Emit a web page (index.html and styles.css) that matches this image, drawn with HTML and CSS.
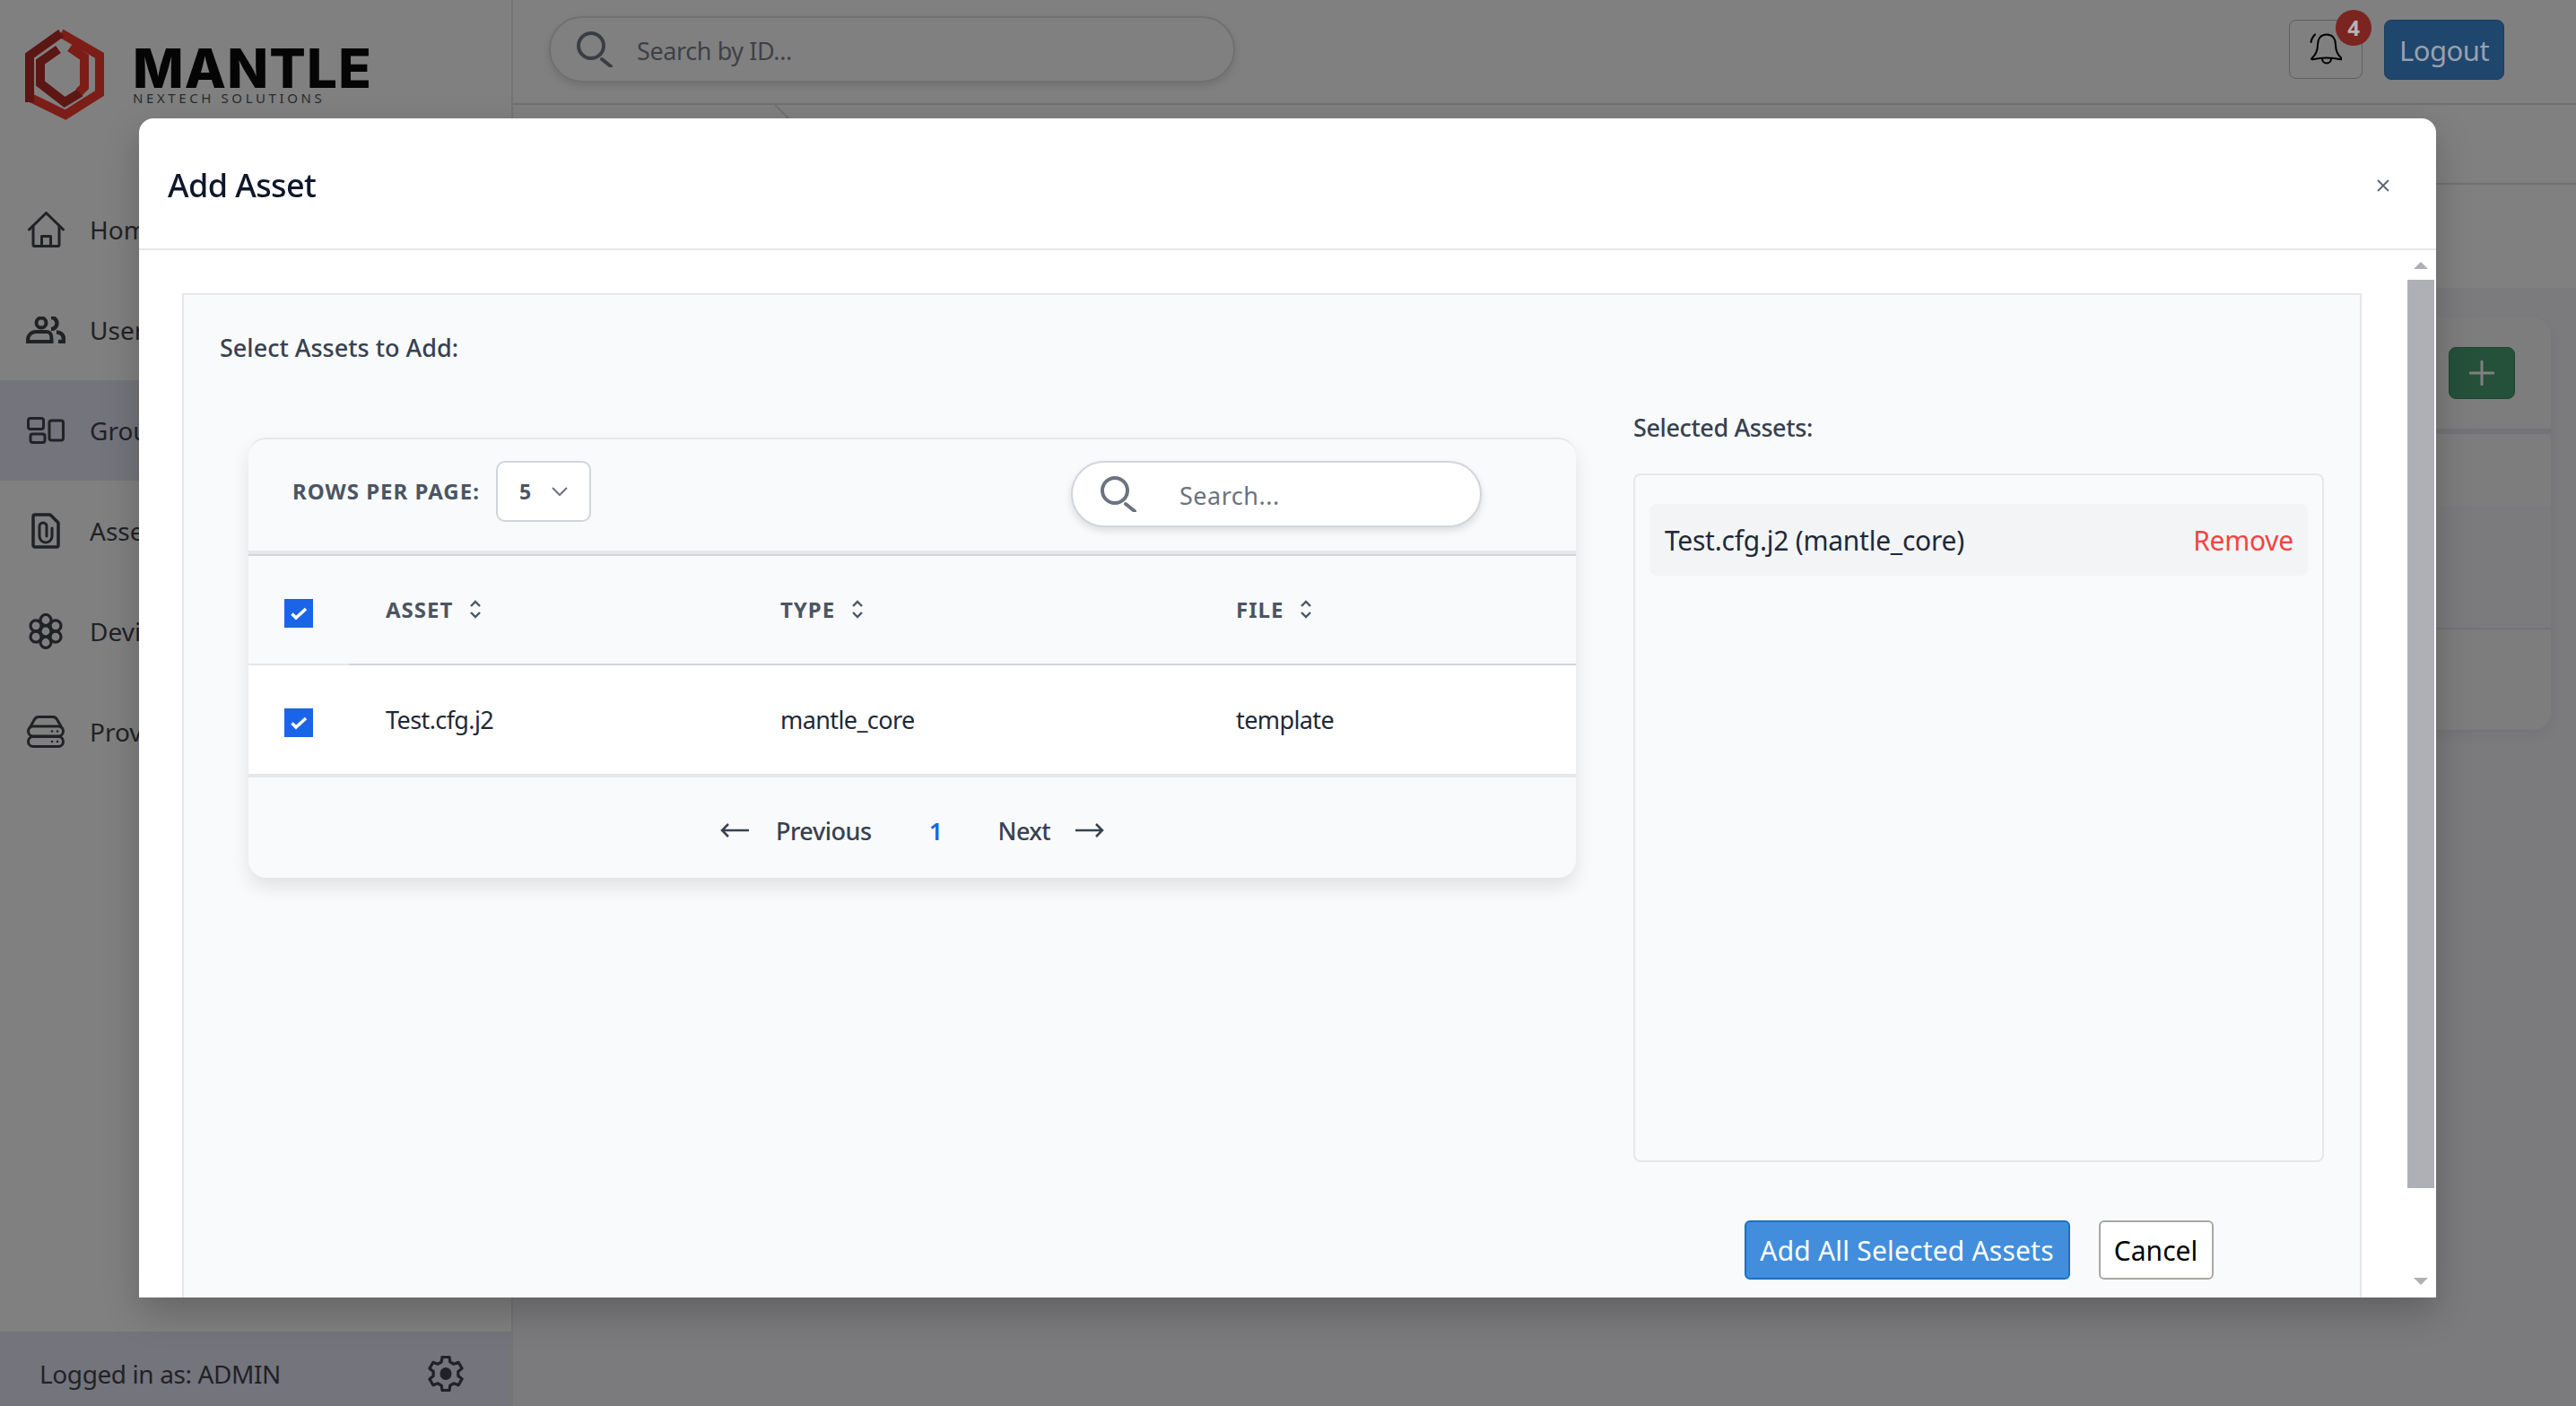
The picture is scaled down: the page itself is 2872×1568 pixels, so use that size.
FILE: index.html
```html
<!DOCTYPE html>
<html lang="en">
<head>
    <meta charset="UTF-8">
    <title>Mantle - Add Asset</title>
    <link rel="stylesheet" href="styles.css">
</head>
<body>
    <div class="app">
        <aside class="sidebar">
            <div class="logo">
                <svg class="logo-mark" width="92" height="104" viewBox="0 0 92 104" fill="none" stroke-width="10" stroke-linejoin="miter">
                    <polyline points="40,6 83,31 83,73 45,97 6,78" stroke="#7c1d17"/>
                    <polyline points="40,6 5,31 5,83" stroke="#5c1613"/>
                    <polyline points="37,24 17,38 17,62 44,83 62,72" stroke="#5c1613"/>
                    <polyline points="50,22 66,33 66,66 60,72" stroke="#7c1d17"/>
                </svg>
                <div class="logo-text">
                    <div class="logo-name">MANTLE</div>
                    <div class="logo-sub">NEXTECH SOLUTIONS</div>
                </div>
            </div>
            <nav class="nav">
                <a class="nav-item">
                    <span class="nav-icon">
                        <svg width="41" height="40" viewBox="0 0 41 40" fill="none" stroke="#212226" stroke-width="3" stroke-linecap="round" stroke-linejoin="round">
                            <path d="M1.5 20 20.5 1.5l19 18.500"/>
                            <path d="M6 16v21a1.500 1.500 0 0 0 1.500 1.500h26a1.500 1.500 0 0 0 1.500-1.500V16"/>
                            <path d="M15.500 38V27.500h10V38"/>
                        </svg>
                    </span>
                    Home
                </a>
                <a class="nav-item">
                    <span class="nav-icon">
                        <svg width="44" height="30" viewBox="0 0 44 30" fill="none" stroke="#212226" stroke-width="4">
                            <circle cx="17" cy="7" r="5.500"/>
                            <path d="M2 28V26c0-5 4-9 9-9h12c5 0 5.500 4 5.500 9v2z"/>
                            <path d="M28 1a6.500 6.500 0 0 1 0 13" stroke-width="4.500"/>
                            <path d="M34 17.500c5 0 8 3 8 8v2.500h-6" stroke-width="4.500"/>
                        </svg>
                    </span>
                    Users
                </a>
                <a class="nav-item active">
                    <span class="nav-icon">
                        <svg width="42" height="30" viewBox="0 0 42 30" fill="none" stroke="#212226" stroke-width="3">
                            <rect x="1.500" y="1.500" width="17" height="12" rx="2.500"/>
                            <rect x="4" y="19" width="16" height="9.500" rx="2.500"/>
                            <rect x="25" y="4" width="15.500" height="22" rx="2.500"/>
                        </svg>
                    </span>
                    Groups
                </a>
                <a class="nav-item">
                    <span class="nav-icon">
                        <svg width="32" height="40" viewBox="0 0 32 40" fill="none" stroke="#212226" stroke-width="3.500" stroke-linejoin="round" stroke-linecap="round">
                            <path d="M4 2h17l9 9v25a2 2 0 0 1-2 2H4a2 2 0 0 1-2-2V4a2 2 0 0 1 2-2z"/>
                            <path d="M23 17v9a7 7 0 0 1-14 0V15a4 4 0 0 1 8 0v11" stroke-width="3"/>
                        </svg>
                    </span>
                    Assets
                </a>
                <a class="nav-item">
                    <span class="nav-icon">
                        <svg width="38" height="40" viewBox="0 0 38 40" fill="none" stroke="#212226" stroke-width="3.200">
                            <circle cx="19" cy="20" r="6"/>
                            <circle cx="19" cy="7.500" r="6"/>
                            <circle cx="19" cy="32.500" r="6"/>
                            <circle cx="8" cy="13.800" r="6"/>
                            <circle cx="30" cy="13.800" r="6"/>
                            <circle cx="8" cy="26.200" r="6"/>
                            <circle cx="30" cy="26.200" r="6"/>
                        </svg>
                    </span>
                    Devices
                </a>
                <a class="nav-item">
                    <span class="nav-icon">
                        <svg width="42" height="36" viewBox="0 0 42 36" fill="none" stroke="#212226" stroke-width="3">
                            <rect x="1.500" y="12" width="39" height="11" rx="5.500"/>
                            <rect x="1.500" y="23.500" width="39" height="11" rx="5.500"/>
                            <path d="M3 14 8 5c1-2 3-3.500 5-3.500h16c2 0 4 1.500 5 3.500l5 9"/>
                            <circle cx="28" cy="17.500" r="1.300" fill="#212226" stroke="none"/>
                            <circle cx="34" cy="17.500" r="1.300" fill="#212226" stroke="none"/>
                            <circle cx="28" cy="29" r="1.300" fill="#212226" stroke="none"/>
                            <circle cx="34" cy="29" r="1.300" fill="#212226" stroke="none"/>
                        </svg>
                    </span>
                    Provisioning
                </a>
            </nav>
            <div class="sidebar-foot">
                <span>Logged in as: ADMIN</span>
                <svg width="40" height="40" viewBox="0 0 40 40" fill="none" stroke="#212226" stroke-width="3.200" stroke-linejoin="round">
                    <polygon points="15.200,6.800 16.050,1.420 23.950,1.420 24.800,6.800 29.030,9.240 34.110,7.290 38.070,14.130 33.830,17.560 33.840,22.440 38.060,25.860 34.110,32.710 29.030,30.760 24.800,33.200 23.950,38.580 16.050,38.580 15.200,33.200 10.970,30.760 5.890,32.710 1.930,25.870 6.170,22.440 6.160,17.560 1.940,14.140 5.890,7.290 10.970,9.240"/>
                    <ellipse cx="20" cy="20" rx="6.500" ry="7" fill="#212226" stroke="none"/>
                </svg>
            </div>
        </aside>

        <main class="main">
            <header class="topbar">
                <div class="top-search">
                    <svg width="40" height="40" viewBox="0 0 40 40" fill="none" stroke="#3a3d44" stroke-width="4" stroke-linecap="round">
                        <circle cx="16" cy="16" r="14"/>
                        <path d="M28 31l10 8"/>
                    </svg>
                    <span>Search by ID...</span>
                </div>
                <div class="top-actions">
                    <button class="bell-btn">
                        <svg width="36" height="37" viewBox="0 0 36 37" fill="none" stroke="#000" stroke-width="2" stroke-linecap="round" stroke-linejoin="round">
                            <path d="M19 1.500c-7 0-10 5-10 11.500 0 7-2 11-6.500 15-.8.800-.2 1.500.8 1.300C8.500 28 13.500 27.500 19 27.500s10.500.5 15.700 1.800c1 .2 1.600-.5.800-1.300-4.500-4-6.500-8-6.500-15 0-6.500-3-11.500-10-11.500z"/>
                            <path d="M14 28.500a5 5 0 0 0 10 0"/>
                            <path d="M6 1.500C3.500 4 2 6.500 1.500 10"/>
                        </svg>
                        <span class="badge">4</span>
                    </button>
                    <button class="logout-btn">Logout</button>
                </div>
            </header>
            <div class="subbar">
                <svg class="crumb" width="20" height="18" viewBox="0 0 20 18" fill="none" stroke="#707070" stroke-width="2">
                    <path d="M2 0l16 16"/>
                </svg>
            </div>
            <div class="band"></div>
            <div class="content">
                <section class="bg-card">
                    <div class="bg-toolbar">
                        <button class="add-btn">
                            <svg width="28" height="28" viewBox="0 0 28 28" stroke="#808080" stroke-width="3" stroke-linecap="round">
                                <path d="M14 1v26M1 14h26"/>
                            </svg>
                        </button>
                    </div>
                    <div class="bg-row light"></div>
                    <div class="bg-row dark"></div>
                    <div class="bg-row light last"></div>
                </section>
            </div>
        </main>
    </div>

    <div class="modal">
        <div class="modal-head">
            <h2>Add Asset</h2>
            <svg width="14" height="14" viewBox="0 0 14 14" stroke="#5b6472" stroke-width="1.800">
                <path d="M1 1l12 12M13 1L1 13"/>
            </svg>
        </div>
        <div class="modal-body">
            <div class="panel">
                <div class="panel-title">Select Assets to Add:</div>
                <div class="asset-cols">
                    <div class="table-card">
                        <div class="toolbar">
                            <span class="rows-label">ROWS PER PAGE:</span>
                            <div class="rows-select">
                                <span>5</span>
                                <svg width="18" height="10" viewBox="0 0 18 10" fill="none" stroke="#6b7280" stroke-width="2">
                                    <path d="M1 1l8 8 8-8"/>
                                </svg>
                            </div>
                            <div class="table-search">
                                <svg width="40" height="40" viewBox="0 0 40 40" fill="none" stroke="#6b7280" stroke-width="4" stroke-linecap="round">
                                    <circle cx="16" cy="16" r="14"/>
                                    <path d="M28 31l10 8"/>
                                </svg>
                                <span>Search...</span>
                            </div>
                        </div>
                        <div class="grid-row head">
                            <div class="check-cell"><span class="check"><svg width="32" height="32" viewBox="0 0 32 32" fill="none" stroke="#fff" stroke-width="3.500"><path d="M8.500 16.500l4.500 4.500 11-10"/></svg></span></div>
                            <div class="head-cell">ASSET <svg class="sort" width="14" height="21" viewBox="0 0 14 21" fill="none" stroke="#4b5563" stroke-width="2.400"><path d="M2 7l5-5 5 5M2 14l5 5 5-5"/></svg></div>
                            <div class="head-cell">TYPE <svg class="sort" width="14" height="21" viewBox="0 0 14 21" fill="none" stroke="#4b5563" stroke-width="2.400"><path d="M2 7l5-5 5 5M2 14l5 5 5-5"/></svg></div>
                            <div class="head-cell">FILE <svg class="sort" width="14" height="21" viewBox="0 0 14 21" fill="none" stroke="#4b5563" stroke-width="2.400"><path d="M2 7l5-5 5 5M2 14l5 5 5-5"/></svg></div>
                        </div>
                        <div class="grid-row body">
                            <div class="check-cell"><span class="check"><svg width="32" height="32" viewBox="0 0 32 32" fill="none" stroke="#fff" stroke-width="3.500"><path d="M8.500 16.500l4.500 4.500 11-10"/></svg></span></div>
                            <div>Test.cfg.j2</div>
                            <div>mantle_core</div>
                            <div>template</div>
                        </div>
                        <div class="pager">
                            <svg width="32" height="16" viewBox="0 0 32 16" fill="none" stroke="#374151" stroke-width="2.500"><path d="M32 8H2M9 1 2 8l7 7"/></svg>
                            <span class="pager-prev">Previous</span>
                            <span class="pager-num">1</span>
                            <span class="pager-next">Next</span>
                            <svg width="32" height="16" viewBox="0 0 32 16" fill="none" stroke="#374151" stroke-width="2.500"><path d="M0 8h30M23 1l7 7-7 7"/></svg>
                        </div>
                    </div>
                    <div class="selected">
                        <div class="selected-title">Selected Assets:</div>
                        <div class="selected-box">
                            <div class="selected-item">
                                <span>Test.cfg.j2 (mantle_core)</span>
                                <span class="remove">Remove</span>
                            </div>
                        </div>
                        <div class="actions">
                            <button class="btn-primary">Add All Selected Assets</button>
                            <button class="btn-cancel">Cancel</button>
                        </div>
                    </div>
                </div>
            </div>
            <div class="scrollbar">
                <span class="arrow-up"></span>
                <span class="thumb"></span>
                <span class="arrow-down"></span>
            </div>
        </div>
    </div>
</body>
</html>
```

FILE: styles.css
```css
* {
    margin: 0;
    padding: 0;
    box-sizing: border-box;
    font-family: "Noto Sans", "Open Sans", sans-serif;
}

body {
    width: 2872px;
    height: 1568px;
    overflow: hidden;
    background-color: #808080;
}

.app {
    display: flex;
    height: 1568px;
}

/* sidebar, dimmed by the modal backdrop */
.sidebar {
    width: 572px;
    border-right: 2px solid #747474;
    background-color: #808080;
    display: flex;
    flex-direction: column;
}

.logo {
    height: 200px;
    display: flex;
    padding: 31px 0 0 28px;
}

.logo-mark {
    margin-right: 28px;
}

.logo-name {
    font-family: "Inter", sans-serif;
    font-size: 60px;
    font-weight: 800;
    line-height: 52px;
    letter-spacing: 1.2px;
    color: #050505;
    margin-top: 19px;
}

.logo-sub {
    font-size: 15px;
    line-height: 15px;
    letter-spacing: 3.6px;
    color: #2b2b2b;
}

.nav {
    flex: 1;
}

.nav-item {
    height: 112px;
    display: flex;
    align-items: center;
    gap: 27px;
    padding-left: 29px;
    font-size: 28px;
    color: #212226;
}

.nav-item.active {
    background-color: #74747c;
}

.nav-icon {
    width: 44px;
    display: flex;
    justify-content: center;
}

.sidebar-foot {
    height: 83px;
    background-color: #74747c;
    display: flex;
    align-items: center;
    justify-content: space-between;
    padding: 10px 53px 0 44px;
    font-size: 28px;
    letter-spacing: -0.4px;
    color: #212226;
}

/* page behind the modal */
.main {
    flex: 1;
    display: flex;
    flex-direction: column;
}

.topbar {
    height: 117px;
    border-bottom: 2px solid #707070;
    display: flex;
    justify-content: space-between;
    padding: 18px 80px 0 40px;
}

.top-search {
    width: 765px;
    height: 74px;
    border: 2px solid #707070;
    border-radius: 37px;
    box-shadow: 0 4px 8px rgba(0, 0, 0, 0.12);
    display: flex;
    align-items: center;
    gap: 27px;
    padding-left: 29px;
    font-size: 27px;
    letter-spacing: -0.4px;
    color: #3f4046;
}

.top-search span {
    padding-top: 3px;
}

.top-actions {
    display: flex;
    gap: 24px;
    padding-top: 4px;
}

.bell-btn {
    position: relative;
    width: 82px;
    height: 66px;
    background: none;
    border: 1px solid #5e5e5e;
    border-radius: 8px;
    display: flex;
    align-items: center;
    justify-content: center;
}

.badge {
    position: absolute;
    top: -12px;
    right: -11px;
    width: 40px;
    height: 40px;
    border-radius: 50%;
    background-color: #7c2420;
    color: #b4b4b4;
    font-size: 24px;
    font-weight: 700;
    line-height: 40px;
    text-align: center;
}

.logout-btn {
    width: 134px;
    height: 67px;
    background-color: #1f466d;
    border: 1px solid #1a3d61;
    border-radius: 8px;
    color: #96a2ae;
    font-size: 31px;
    letter-spacing: -0.5px;
}

.subbar {
    height: 89px;
    border-bottom: 2px solid #707070;
    padding-left: 290px;
}

.crumb {
    display: block;
}

.band {
    height: 115px;
}

.content {
    flex: 1;
    background-color: #7b7b7d;
    padding: 33px 28px 0 28px;
}

.bg-card {
    height: 460px;
    background-color: #7c7d7c;
    border-radius: 20px;
    overflow: hidden;
    box-shadow: 0 6px 14px rgba(0, 0, 0, 0.06);
}

.bg-toolbar {
    height: 130px;
    border-bottom: 6px solid #737378;
    display: flex;
    justify-content: flex-end;
    padding: 33px 40px 0 0;
}

.add-btn {
    width: 74px;
    height: 58px;
    background-color: #25503a;
    border: 1px solid #1f4531;
    border-radius: 8px;
    display: flex;
    align-items: center;
    justify-content: center;
}

.bg-row.light {
    height: 80px;
}

.bg-row.dark {
    height: 138px;
    background-color: #7b7b7d;
    border-bottom: 2px solid #737375;
}

.bg-row.last {
    height: 112px;
}

/* modal */
.modal {
    position: fixed;
    left: 155px;
    top: 132px;
    width: 2561px;
    height: 1315px;
    background-color: white;
    border-radius: 16px 16px 0 0;
    overflow: hidden;
    box-shadow: 0 16px 40px rgba(0, 0, 0, 0.22);
    display: flex;
    flex-direction: column;
}

.modal-head {
    height: 147px;
    flex-shrink: 0;
    border-bottom: 2px solid #e5e7eb;
    display: flex;
    align-items: center;
    justify-content: space-between;
    padding: 4px 52px 0 32px;
}

.modal-head h2 {
    font-size: 36px;
    font-weight: 500;
    letter-spacing: -0.6px;
    color: #0f172a;
}

.modal-body {
    position: relative;
    flex: 1;
    overflow: hidden;
    padding: 48px 0 0 48px;
}

.panel {
    width: 2430px;
    height: 1200px;
    background-color: #f9fafb;
    border: 2px solid #e5e7eb;
    padding: 39px 40px 0 40px;
}

.panel-title {
    font-size: 27px;
    font-weight: 500;
    line-height: 40px;
    color: #374151;
}

.asset-cols {
    display: flex;
    margin-top: 49px;
}

.table-card {
    width: 1480px;
    height: 491px;
    margin: 31px 64px 0 32px;
    border-top: 2px solid #e5e7eb;
    border-radius: 20px;
    overflow: hidden;
    background-color: #f9fafb;
    box-shadow: 0 10px 20px rgba(0, 0, 0, 0.1);
    font-size: 27px;
    letter-spacing: -0.6px;
    color: #1f2937;
}

.toolbar {
    height: 128px;
    border-bottom: 4px solid #e5e7eb;
    display: flex;
    align-items: flex-start;
    padding: 24px 105px 0 49px;
}

.rows-label {
    font-size: 24px;
    font-weight: 700;
    line-height: 68px;
    letter-spacing: 1px;
    color: #4b5563;
    margin-right: 18px;
}

.rows-select {
    width: 106px;
    height: 68px;
    background-color: white;
    border: 2px solid #d1d5db;
    border-radius: 10px;
    display: flex;
    align-items: center;
    gap: 24px;
    padding-left: 24px;
    font-size: 23px;
    font-weight: 700;
    color: #4b5563;
}

.table-search {
    width: 458px;
    height: 74px;
    margin-left: auto;
    background-color: white;
    border: 2px solid #d1d5db;
    border-radius: 37px;
    box-shadow: 0 4px 8px rgba(0, 0, 0, 0.12);
    display: flex;
    align-items: center;
    gap: 48px;
    padding-left: 31px;
    font-size: 27px;
    letter-spacing: 0.5px;
    color: #6b7280;
}

.table-search span {
    padding-top: 2px;
}

.grid-row {
    display: grid;
    grid-template-columns: 153px 440px 508px 1fr;
    align-items: center;
}

.grid-row.head {
    position: relative;
    height: 124px;
    border-top: 2px solid #d1d5db;
    border-bottom: 2px solid #d1d5db;
}

.grid-row.head::before {
    content: "";
    position: absolute;
    left: 0;
    bottom: -2px;
    width: 112px;
    height: 2px;
    background-color: #e5e7eb;
}

.grid-row.body {
    height: 125px;
    background-color: white;
    border-bottom: 4px solid #e5e7eb;
}

.check-cell {
    padding: 7px 0 0 40px;
}

.check {
    display: block;
    width: 32px;
    height: 32px;
    background-color: #1a64e8;
}

.head-cell {
    display: flex;
    align-items: center;
    gap: 18px;
    padding-bottom: 2px;
    font-size: 24px;
    font-weight: 700;
    letter-spacing: 1px;
    color: #4b5563;
}

.pager {
    height: 112px;
    padding-top: 6px;
    display: flex;
    align-items: center;
    justify-content: center;
    color: #374151;
}

.pager-prev {
    margin: 0 64px 0 30px;
    font-weight: 500;
    letter-spacing: -0.45px;
}

.pager-num {
    margin-right: 62px;
    color: #1a64e8;
    font-weight: 600;
}

.pager-next {
    margin-right: 28px;
    font-weight: 500;
}

.selected {
    width: 770px;
}

.selected-title {
    font-size: 27px;
    font-weight: 500;
    line-height: 40px;
    letter-spacing: -0.4px;
    color: #374151;
    margin-bottom: 31px;
}

.selected-box {
    height: 768px;
    border: 2px solid #e5e7eb;
    border-radius: 8px;
    padding: 32px 16px;
}

.selected-item {
    height: 80px;
    background-color: #f3f4f6;
    border-radius: 8px;
    display: flex;
    align-items: center;
    justify-content: space-between;
    padding: 0 16px 0 17px;
    font-size: 30px;
    letter-spacing: -0.25px;
    color: #1f2937;
}

.remove {
    color: #ef4444;
}

.actions {
    display: flex;
    justify-content: center;
    gap: 32px;
    margin-top: 65px;
}

.btn-primary {
    width: 363px;
    height: 66px;
    background-color: #428edc;
    border: 2px solid #1a6fc4;
    border-radius: 6px;
    color: white;
    font-size: 30px;
    letter-spacing: 0.2px;
}

.btn-cancel {
    width: 128px;
    height: 66px;
    background-color: white;
    border: 2px solid #aaa6a3;
    border-radius: 6px;
    color: black;
    font-size: 30px;
}

.scrollbar {
    position: absolute;
    right: 2px;
    top: 0;
    bottom: 0;
    width: 30px;
}

.thumb {
    position: absolute;
    top: 33px;
    left: 0;
    width: 30px;
    height: 1013px;
    background-color: #aeb0b5;
}

.arrow-up,
.arrow-down {
    position: absolute;
    left: 7px;
    width: 0;
    height: 0;
    border-left: 8px solid transparent;
    border-right: 8px solid transparent;
}

.arrow-up {
    top: 13px;
    border-bottom: 8px solid #aeb0b5;
}

.arrow-down {
    top: 1146px;
    border-top: 8px solid #aeb0b5;
}
```
